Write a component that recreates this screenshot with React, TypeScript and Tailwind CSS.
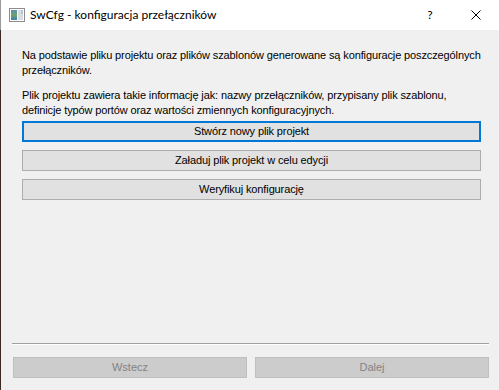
import React from 'react';

const ui = "font-['Liberation_Sans',Arial,sans-serif] text-[11px] tracking-[-0.12px] text-black";

function AppIcon() {
  return (
    <svg width="16" height="14" viewBox="0 0 16 14" className="shrink-0">
      <defs>
        <linearGradient id="pane" x1="0" y1="0" x2="0" y2="1">
          <stop offset="0" stopColor="#5b8fb8" />
          <stop offset="0.5" stopColor="#6fa36a" />
          <stop offset="1" stopColor="#3f7fb0" />
        </linearGradient>
      </defs>
      <rect x="0.5" y="0.5" width="15" height="13" fill="#ffffff" stroke="#8c8c8c" />
      <rect x="2" y="2" width="6" height="10" fill="url(#pane)" />
      <rect x="9" y="2" width="5" height="10" fill="#d8dde2" />
      <rect x="12" y="2" width="2" height="4" fill="#b9c4cf" />
    </svg>
  );
}

function ActionButton({ label, focused }: { label: string; focused?: boolean }) {
  return (
    <button
      className={
        focused
          ? 'h-[21px] w-full border-2 border-[#0078d7] bg-[#e1e1e1] ' + ui
          : 'h-[21px] w-full border border-[#adadad] bg-[#e1e1e1] ' + ui
      }
    >
      {label}
    </button>
  );
}

function NavButton({ label }: { label: string }) {
  return (
    <button
      disabled
      className="h-[21px] flex-1 border border-[#bfbfbf] bg-[#cccccc] font-['Liberation_Sans',Arial,sans-serif] text-[11px] text-[#838383]"
    >
      {label}
    </button>
  );
}

export default function App() {
  return (
    <div className="w-[499px] h-[390px] flex flex-col bg-[#f0f0f0] overflow-hidden">
      {/* caption */}
      <div className="h-[30px] flex items-center bg-white border-l border-[#9a9a9a]">
        <div className="pl-[8px] pr-[5px] flex items-center">
          <AppIcon />
        </div>
        <span className="font-['Lato',sans-serif] text-[12px] text-black">
          SwCfg - konfiguracja przełączników
        </span>
        <div className="flex-1" />
        <div className="w-[46px] h-full flex items-center justify-center font-['Lato',sans-serif] text-[12px] text-black">
          ?
        </div>
        <div className="w-[46px] h-full flex items-center justify-center">
          <svg width="10" height="10" viewBox="0 0 10 10">
            <path d="M0.5 0.5L9.5 9.5M9.5 0.5L0.5 9.5" stroke="#000" strokeWidth="1" />
          </svg>
        </div>
      </div>

      {/* body */}
      <div className="flex-1 flex flex-col border-l border-[#3b2a22]">
        <div className={'pt-[18px] pl-[21px] pr-[10px] leading-[15px] whitespace-nowrap ' + ui}>
          <p>
            Na podstawie pliku projektu oraz plików szablonów generowane są konfiguracje poszczególnych
            <br />
            przełączników.
          </p>
          <p className="mt-[10px]">
            Plik projektu zawiera takie informację jak: nazwy przełączników, przypisany plik szablonu,
            <br />
            definicje typów portów oraz wartości zmiennych konfiguracyjnych.
          </p>
        </div>

        <div className="mt-[3px] pl-[21px] pr-[18px] flex flex-col gap-[8px]">
          <ActionButton label="Stwórz nowy plik projekt" focused />
          <ActionButton label="Załaduj plik projekt w celu edycji" />
          <ActionButton label="Weryfikuj konfigurację" />
        </div>

        <div className="flex-1" />

        <div className="ml-[11px] mr-[10px] border-t border-[#a0a0a0] border-b border-b-white" />

        <div className="mt-[12px] mb-[12px] ml-[12px] mr-[10px] flex gap-[8px]">
          <NavButton label="Wstecz" />
          <NavButton label="Dalej" />
        </div>
      </div>
    </div>
  );
}
